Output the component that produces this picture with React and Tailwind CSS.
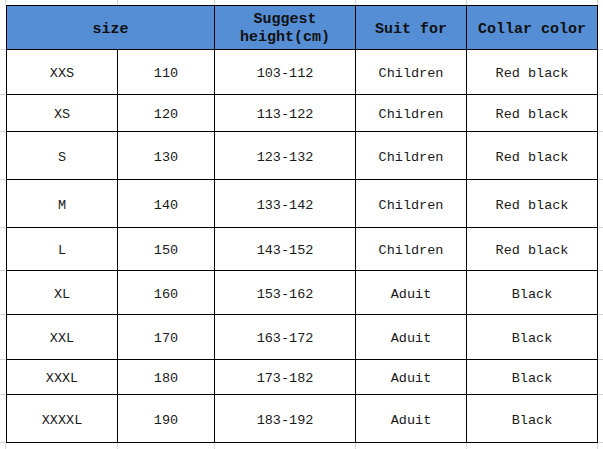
import React from "react";

const rows = [
  ["XXS", "110", "103-112", "Children", "Red black"],
  ["XS", "120", "113-122", "Children", "Red black"],
  ["S", "130", "123-132", "Children", "Red black"],
  ["M", "140", "133-142", "Children", "Red black"],
  ["L", "150", "143-152", "Children", "Red black"],
  ["XL", "160", "153-162", "Aduit", "Black"],
  ["XXL", "170", "163-172", "Aduit", "Black"],
  ["XXXL", "180", "173-182", "Aduit", "Black"],
  ["XXXXL", "190", "183-192", "Aduit", "Black"],
];

const mono = { fontFamily: '"Liberation Mono", "DejaVu Sans Mono", monospace' };

export default function App() {
  return (
    <div className="w-[603px] h-[449px] bg-white overflow-hidden" style={mono}>
      <div className="grid grid-cols-[6px_112px_97px_141px_111px_131px_5px] grid-rows-[5px_45px_45px_37px_48px_48px_43px_44px_45px_35px_48px_6px]">
        {/* top gutter */}
        <div className="border-r border-[#d4d4d4]" />
        <div className="border-r border-[#d4d4d4]" />
        <div className="border-r border-[#d4d4d4]" />
        <div className="border-r border-[#d4d4d4]" />
        <div className="border-r border-[#d4d4d4]" />
        <div className="border-r border-[#d4d4d4]" />
        <div />

        {/* header */}
        <div className="border-b border-[#d4d4d4]" />
        <div className="col-span-2 bg-[#558ed5] border border-black flex items-center justify-center pt-[5px] text-[15px] font-bold text-[#111]">
          size
        </div>
        <div className="bg-[#558ed5] border-t border-r border-b border-black flex flex-col items-center justify-center pt-[3px] text-[15px] font-bold leading-[18px] text-[#111]">
          <span>Suggest</span>
          <span>height(cm)</span>
        </div>
        <div className="bg-[#558ed5] border-t border-r border-b border-black flex items-center justify-center pt-[5px] text-[15px] font-bold text-[#111]">
          Suit for
        </div>
        <div className="bg-[#558ed5] border-t border-r border-b border-black flex items-center justify-center pt-[5px] text-[15px] font-bold text-[#111]">
          Collar color
        </div>
        <div className="border-b border-[#d4d4d4]" />

        {rows.map((r, i) => (
          <React.Fragment key={i}>
            <div className="border-b border-[#d4d4d4]" />
            <div className="border-l border-r border-b border-black flex items-center justify-center pt-[5px] text-[13.5px] text-[#1a1a1a]">
              {r[0]}
            </div>
            <div className="border-r border-b border-black flex items-center justify-center pt-[5px] text-[13.5px] text-[#1a1a1a]">
              {r[1]}
            </div>
            <div className="border-r border-b border-black flex items-center justify-center pt-[5px] text-[13.5px] text-[#1a1a1a]">
              {r[2]}
            </div>
            <div className="border-r border-b border-black flex items-center justify-center pt-[5px] text-[13.5px] text-[#1a1a1a]">
              {r[3]}
            </div>
            <div className="border-r border-b border-black flex items-center justify-center pt-[5px] text-[13.5px] text-[#1a1a1a]">
              {r[4]}
            </div>
            <div className="border-b border-[#d4d4d4]" />
          </React.Fragment>
        ))}

        {/* bottom gutter */}
        <div className="border-r border-[#d4d4d4]" />
        <div className="border-r border-[#d4d4d4]" />
        <div className="border-r border-[#d4d4d4]" />
        <div className="border-r border-[#d4d4d4]" />
        <div className="border-r border-[#d4d4d4]" />
        <div className="border-r border-[#d4d4d4]" />
        <div />
      </div>
    </div>
  );
}
